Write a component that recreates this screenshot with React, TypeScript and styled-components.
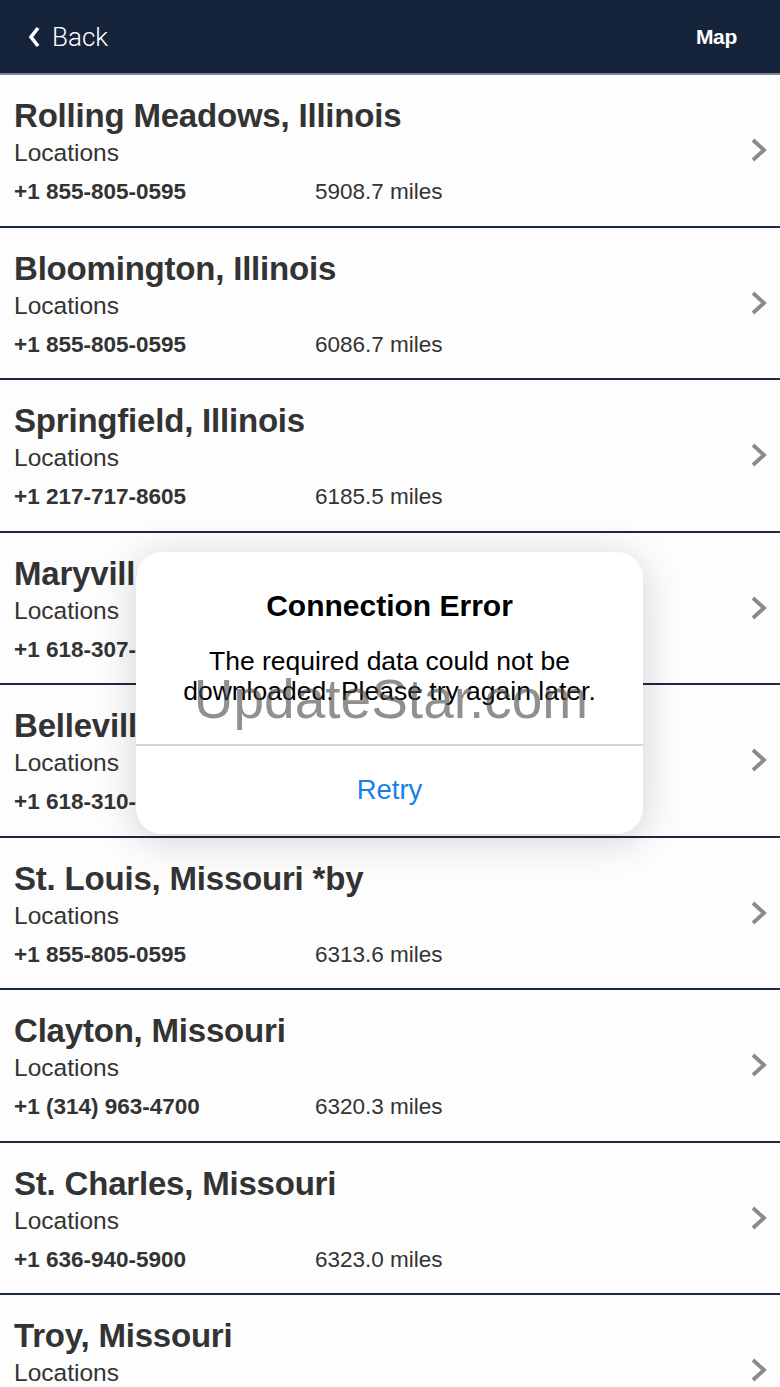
import styled, { createGlobalStyle } from "styled-components";

const GlobalStyle = createGlobalStyle`
    html, body {
        margin: 0;
        padding: 0;
        background: #fdfdfd;
        font-family: "Liberation Sans", Arial, sans-serif;
    }
`

const Page = styled.div`
    position: relative;
    width: 780px;
    height: 1387px;
    overflow: hidden;
    background: #fdfdfd;
`

const Header = styled.div`
    height: 73px;
    border-bottom: 2px solid #7c8796;
    background: #15233b;
    display: flex;
    align-items: center;
    justify-content: space-between;
    padding: 0 43px 0 28px;
    color: white;
`

const BackButton = styled.div`
    display: flex;
    align-items: center;
    gap: 11px;
    font-family: Roboto, "Liberation Sans", sans-serif;
    font-weight: 300;
    font-size: 26px;
`

const MapButton = styled.div`
    font-size: 21px;
    font-weight: bold;
    letter-spacing: -0.3px;
`

const Row = styled.div`
    position: relative;
    box-sizing: border-box;
    height: 152.5px;
    border-bottom: 2px solid #1b2a40;
    padding: 23px 0 0 14px;
    color: #333;
`

const Title = styled.div`
    font-size: 33px;
    font-weight: bold;
    line-height: 36px;
    letter-spacing: -0.2px;
`

const Subtitle = styled.div`
    font-size: 24.5px;
    line-height: 37px;
`

const Meta = styled.div`
    display: grid;
    grid-template-columns: 301px auto;
    margin-top: 3px;
    font-size: 22.5px;
    line-height: 36px;
`

const Phone = styled.span`
    font-weight: bold;
`

const Chevron = styled.svg`
    position: absolute;
    right: 11px;
    top: 50%;
    margin-top: -13px;
`

const Dialog = styled.div`
    position: absolute;
    left: 136px;
    top: 552px;
    width: 507px;
    height: 282px;
    border-radius: 26px;
    background: #ffffff;
    box-shadow: 0 6px 40px rgba(0, 0, 0, 0.18);
    display: flex;
    flex-direction: column;
    text-align: center;
    color: #000;
`

const DialogBody = styled.div`
    padding: 37px 10px 0;
    height: 194px;
    box-sizing: border-box;
    border-bottom: 2px solid #d4d4d6;
`

const DialogTitle = styled.div`
    font-size: 30px;
    font-weight: bold;
    line-height: 34px;
`

const DialogText = styled.div`
    margin-top: 23px;
    font-size: 26.5px;
    line-height: 30px;
`

const DialogButton = styled.div`
    flex: 1;
    display: flex;
    align-items: center;
    justify-content: center;
    font-size: 27.5px;
    color: #1a7fe4;
`

const Watermark = styled.div`
    position: absolute;
    left: 0;
    right: 0;
    top: 666px;
    text-align: center;
    padding-left: 2px;
    font-size: 55px;
    line-height: 66px;
    color: rgba(70, 70, 70, 0.6);
    pointer-events: none;
`

const places = [
    { name: "Rolling Meadows, Illinois", phone: "+1 855-805-0595", miles: "5908.7 miles" },
    { name: "Bloomington, Illinois", phone: "+1 855-805-0595", miles: "6086.7 miles" },
    { name: "Springfield, Illinois", phone: "+1 217-717-8605", miles: "6185.5 miles" },
    { name: "Maryville, Illinois", phone: "+1 618-307-9001", miles: "6293.2 miles" },
    { name: "Belleville, Illinois", phone: "+1 618-310-1150", miles: "6308.9 miles" },
    { name: "St. Louis, Missouri *by", phone: "+1 855-805-0595", miles: "6313.6 miles" },
    { name: "Clayton, Missouri", phone: "+1 (314) 963-4700", miles: "6320.3 miles" },
    { name: "St. Charles, Missouri", phone: "+1 636-940-5900", miles: "6323.0 miles" },
    { name: "Troy, Missouri", phone: "+1 636-528-4555", miles: "6354.8 miles" },
]

const App = () => {
    return (
        <Page>
            <GlobalStyle />
            <Header>
                <BackButton>
                    <svg width="13" height="22" viewBox="0 0 13 22">
                        <path d="M10 2 L3 11 L10 20" fill="none" stroke="white" strokeWidth="3.6" strokeLinejoin="miter" />
                    </svg>
                    Back
                </BackButton>
                <MapButton>Map</MapButton>
            </Header>
            {places.map(p => (
                <Row key={p.name}>
                    <Title>{p.name}</Title>
                    <Subtitle>Locations</Subtitle>
                    <Meta>
                        <Phone>{p.phone}</Phone>
                        <span>{p.miles}</span>
                    </Meta>
                    <Chevron width="19" height="26" viewBox="0 0 19 26">
                        <path d="M3 3 L14 13 L3 23" fill="none" stroke="#8a8a8a" strokeWidth="3.8" />
                    </Chevron>
                </Row>
            ))}
            <Dialog>
                <DialogBody>
                    <DialogTitle>Connection Error</DialogTitle>
                    <DialogText>
                        The required data could not be<br />downloaded. Please try again later.
                    </DialogText>
                </DialogBody>
                <DialogButton>Retry</DialogButton>
            </Dialog>
            <Watermark>UpdateStar.com</Watermark>
        </Page>
    )
}

export default App;
